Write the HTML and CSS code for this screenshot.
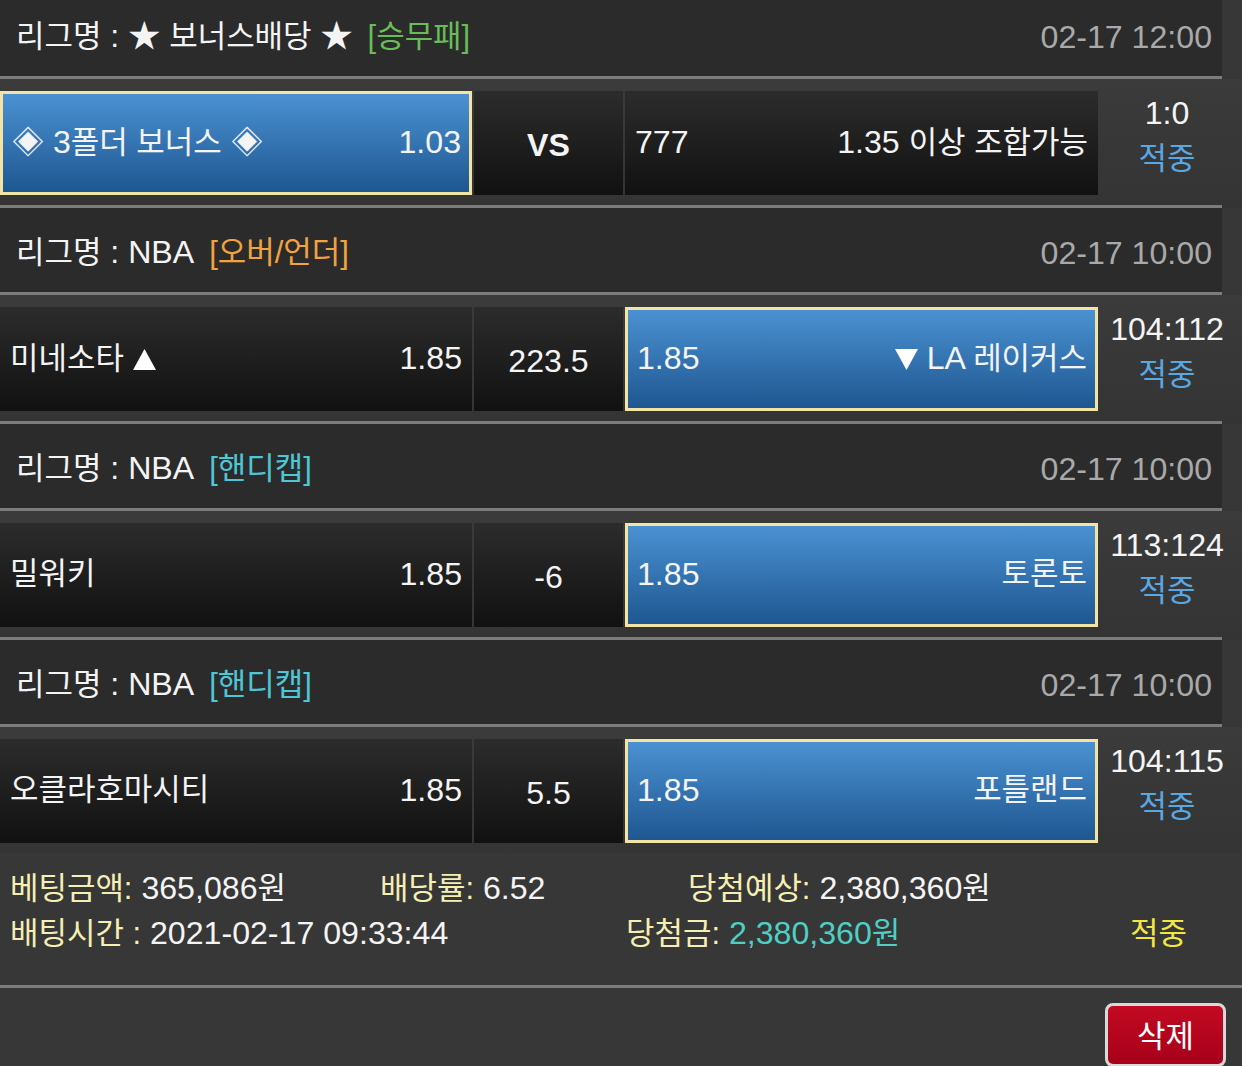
FILE: index.html
```html
<!DOCTYPE html>
<html lang="ko">
<head>
<meta charset="utf-8">
<title>베팅내역</title>
<link rel="stylesheet" href="styles.css">
</head>
<body>
<div class="bet">
  <div class="list">
    <div class="league">
      <span class="lname"><span class="k">리그명</span> : ★ <span class="k">보너스배당</span> ★</span><span class="tag k green">[승무패]</span>
      <span class="time">02-17 12:00</span>
    </div>
    <div class="match">
      <div class="cell side sel"><span>◈ 3<span class="k">폴더 보너스</span> ◈</span><span>1.03</span></div>
      <div class="cell mid vs">VS</div>
      <div class="cell side"><span>777</span><span>1.35 <span class="k">이상 조합가능</span></span></div>
      <div class="score"><span class="res">1:0</span><span class="hit k">적중</span></div>
    </div>

    <div class="league">
      <span class="lname"><span class="k">리그명</span> : NBA</span><span class="tag k orange">[오버/언더]</span>
      <span class="time">02-17 10:00</span>
    </div>
    <div class="match">
      <div class="cell side"><span><span class="k">미네소타</span> <svg class="tri" viewBox="0 0 23 21" aria-label="▲"><path d="M11.5 0 L23 21 L0 21 Z"/></svg></span><span>1.85</span></div>
      <div class="cell mid">223.5</div>
      <div class="cell side sel"><span>1.85</span><span><svg class="tri" viewBox="0 0 23 21" aria-label="▼"><path d="M0 0 L23 0 L11.5 21 Z"/></svg> LA <span class="k">레이커스</span></span></div>
      <div class="score"><span class="res">104:112</span><span class="hit k">적중</span></div>
    </div>

    <div class="league">
      <span class="lname"><span class="k">리그명</span> : NBA</span><span class="tag k cyan">[핸디캡]</span>
      <span class="time">02-17 10:00</span>
    </div>
    <div class="match">
      <div class="cell side"><span class="k">밀워키</span><span>1.85</span></div>
      <div class="cell mid">-6</div>
      <div class="cell side sel"><span>1.85</span><span class="k">토론토</span></div>
      <div class="score"><span class="res">113:124</span><span class="hit k">적중</span></div>
    </div>

    <div class="league">
      <span class="lname"><span class="k">리그명</span> : NBA</span><span class="tag k cyan">[핸디캡]</span>
      <span class="time">02-17 10:00</span>
    </div>
    <div class="match last">
      <div class="cell side"><span class="k">오클라호마시티</span><span>1.85</span></div>
      <div class="cell mid">5.5</div>
      <div class="cell side sel"><span>1.85</span><span class="k">포틀랜드</span></div>
      <div class="score"><span class="res">104:115</span><span class="hit k">적중</span></div>
    </div>
  </div>

  <div class="summary">
    <div class="srow r1">
      <span><b class="lbl k">베팅금액:</b> 365,086<span class="k">원</span></span>
      <span><b class="lbl k">배당률:</b> 6.52</span>
      <span><b class="lbl k">당첨예상:</b> 2,380,360<span class="k">원</span></span>
    </div>
    <div class="srow r2">
      <span><b class="lbl k">배팅시간 :</b> 2021-02-17 09:33:44</span>
      <span><b class="lbl k">당첨금:</b> <span class="win">2,380,360<span class="k">원</span></span></span>
      <span class="ok k">적중</span>
    </div>
  </div>

  <div class="actions">
    <button class="del k">삭제</button>
  </div>
</div>
</body>
</html>
```

FILE: styles.css
```css
* { box-sizing: border-box; }

html, body {
  margin: 0;
  padding: 0;
  background: #373737;
  overflow: hidden;
}

body {
  font-family: "Liberation Sans", "Noto Sans CJK KR", Arial, sans-serif;
  font-size: 30px;
  font-size-adjust: 0.566;
  color: #f4f4f4;
  width: 1242px;
  height: 1066px;
}

/* Hangul runs are set a little smaller than the Latin digits */
.k {
  font-size-adjust: 0.545;
}

.list {
  margin-top: -8px;
}

.league {
  width: 1222px;
  height: 87px;
  padding: 5px 10px 0 16px;
  display: flex;
  align-items: center;
  background: #2b2b2b;
  border-bottom: 3px solid #7c7c7c;
  line-height: 1;
}

.tag { margin-left: 15px; }
.green { color: #69bd58; }
.orange { color: #f2a23e; }
.cyan { color: #4fc6d6; }

.time {
  margin-left: auto;
  color: #a9a9a9;
}

.match {
  height: 129px;
  padding: 12px 0 13px;
  display: grid;
  grid-template-columns: 472px 149px 473px 1fr;
  column-gap: 2px;
  background:
    linear-gradient(#7c7c7c, #7c7c7c) no-repeat left bottom / 1222px 3px,
    linear-gradient(#3b3b3b, #343434);
}

.match.last {
  height: 126px;
  padding-bottom: 10px;
  background: linear-gradient(#3b3b3b, #343434);
}

.cell {
  height: 104px;
  display: flex;
  align-items: center;
  background: linear-gradient(#2c2c2c, #111111);
  line-height: 1;
}

.side {
  justify-content: space-between;
  padding: 0 10px 2px 10px;
}

.side.sel {
  border: 3px solid #f3e3a4;
  padding: 0 8px 2px 9px;
  background: linear-gradient(#4b91d2, #1e5791);
}

.tri {
  width: 23px;
  height: 21px;
  fill: #ffffff;
  vertical-align: -1px;
}

.mid {
  justify-content: center;
  padding-top: 4px;
}

.vs {
  font-weight: bold;
}

.score {
  display: flex;
  flex-direction: column;
  align-items: center;
  padding: 0 8px 0 0;
  line-height: 45px;
}

.hit { color: #5aa8e2; }

.summary {
  padding: 13px 0 29px 10px;
  border-bottom: 3px solid #7c7c7c;
  line-height: 45px;
}

.srow {
  display: grid;
  white-space: nowrap;
}

.r1 { grid-template-columns: 370px 308px 1fr; }
.r2 { grid-template-columns: 616px 504px 1fr; }

.lbl {
  font-weight: normal;
  color: #f5efb3;
}

.win { color: #4fcfc4; }
.ok { color: #f2e644; }

.actions {
  display: flex;
  justify-content: flex-end;
  padding: 15px 16px 0 0;
}

.del {
  width: 121px;
  height: 64px;
  border: 3px solid #d9d9d9;
  border-radius: 8px;
  background: linear-gradient(#c20a22, #a8001a);
  color: #fff;
  font-family: "Liberation Sans", "Noto Sans CJK KR", sans-serif;
  font-size: 30px;
  padding: 0 0 4px;
}
```
